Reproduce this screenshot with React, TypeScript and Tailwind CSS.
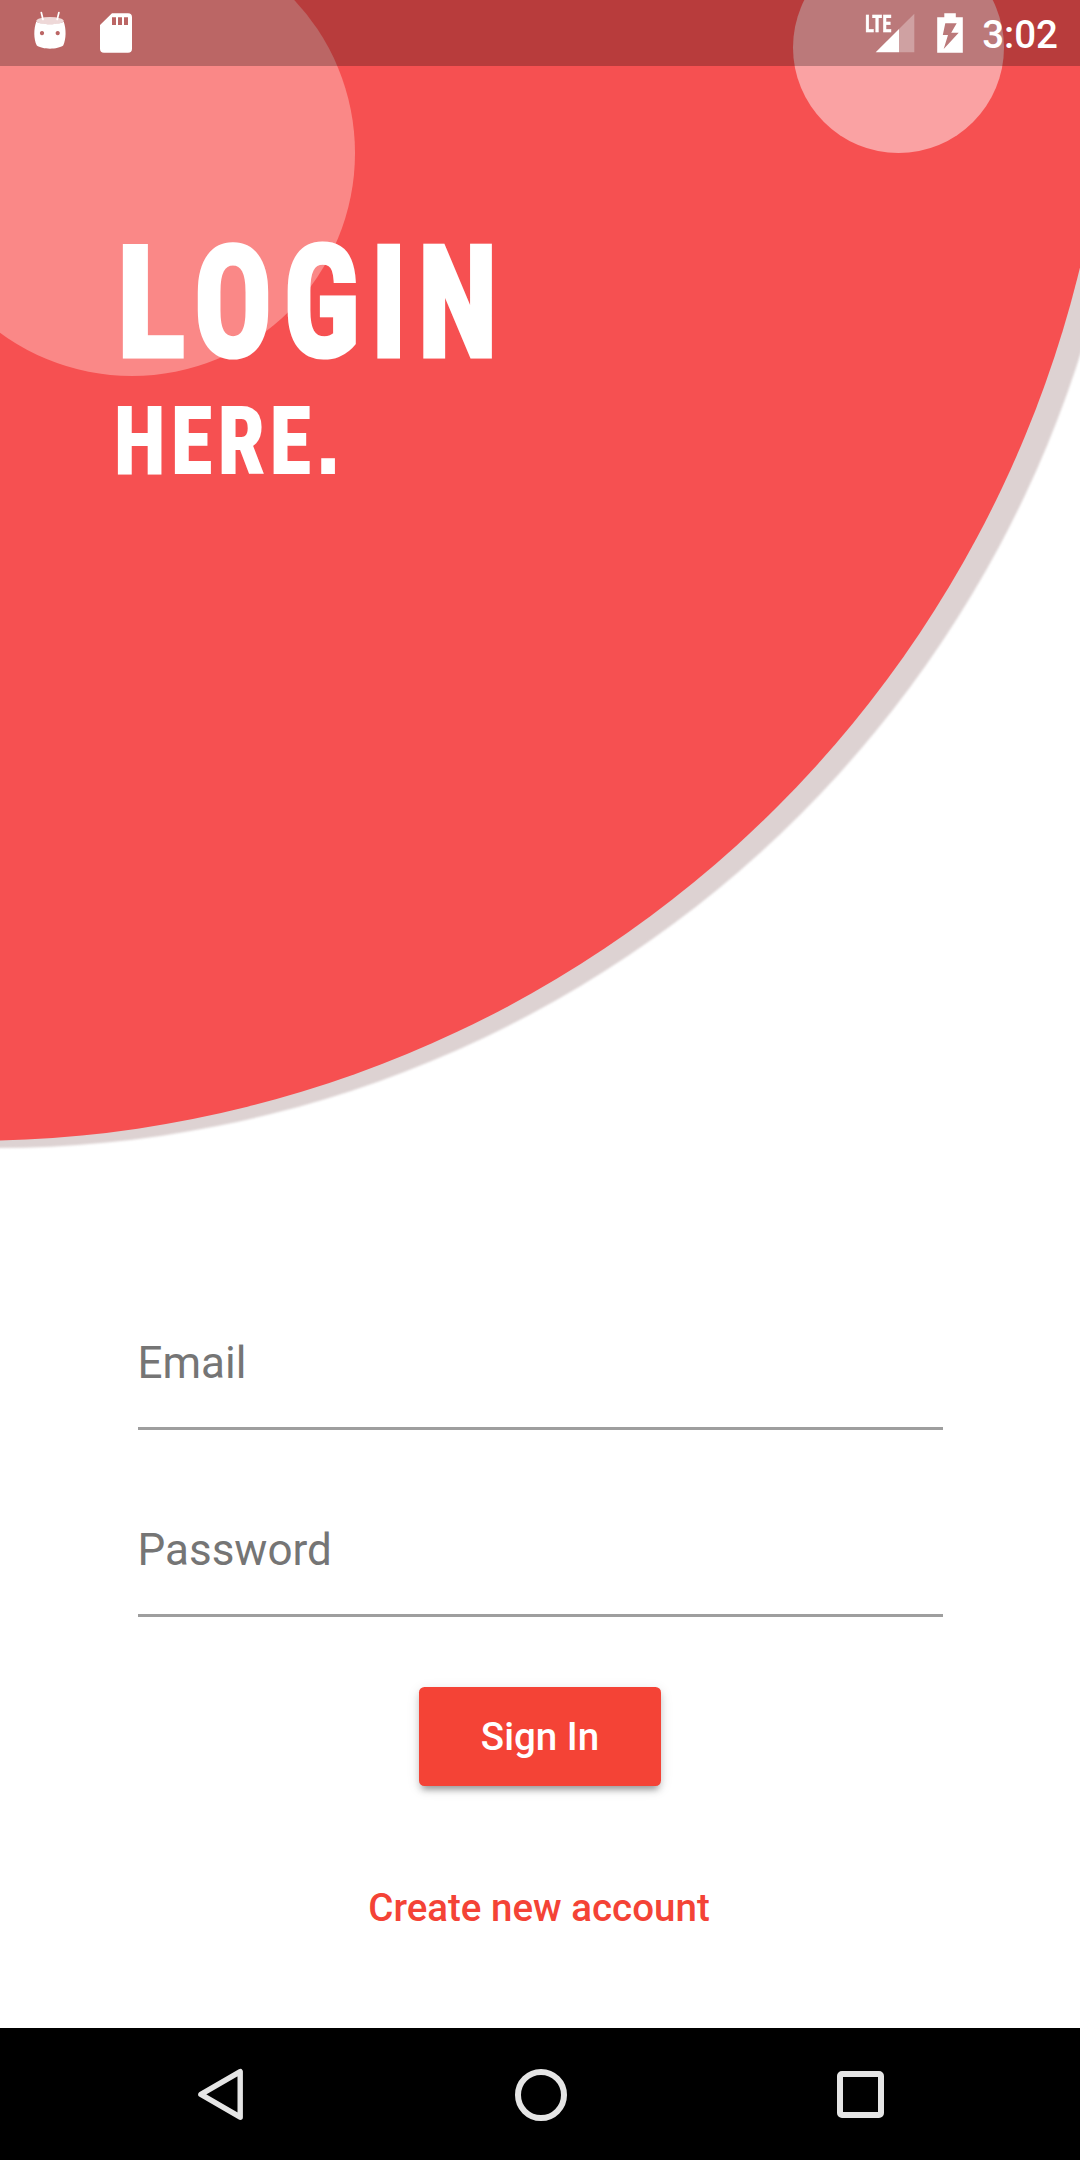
import React from "react";

function AndroidIcon() {
  return (
    <svg className="h-[66px] w-[34px]" viewBox="33 0 34 66" fill="#fff">
      <path d="M41.3 12.5 L43 19.5 M58.9 12.5 L57.2 19.5" stroke="#fff" strokeWidth="1.7" strokeLinecap="round" />
      <path
        fillRule="evenodd"
        d="M36.3 21.5 C41 25.2 59 25.2 63.7 21.5 C66.3 29 66.3 39 63.2 45.6 C58 49.7 42 49.7 36.8 45.6 C33.6 39 33.6 29 36.3 21.5 Z M42 31 a2.1 2.1 0 1 0 .01 0 Z M57.7 31 a2.1 2.1 0 1 0 .01 0 Z"
      />
      <ellipse cx="50" cy="20.8" rx="13.7" ry="3.7" opacity="0.75" />
    </svg>
  );
}

function SdCardIcon() {
  return (
    <svg className="ml-[33px] h-[66px] w-[32px]" viewBox="100 0 32 66" fill="#fff">
      <path
        fillRule="evenodd"
        d="M112 13.2 H128 a4 4 0 0 1 4 4 V48.7 a4 4 0 0 1 -4 4 H104 a4 4 0 0 1 -4 -4 V25 Z M112 17.2 V25 H116 V17.2 Z M118 17.2 V25 H122 V17.2 Z M124 17.2 V25 H128 V17.2 Z"
      />
    </svg>
  );
}

function SignalIcon() {
  return (
    <div className="relative h-[66px] w-[50px]">
      <svg className="h-[66px] w-[50px]" viewBox="865 0 50 66" fill="#fff">
        <path d="M899 29 L914.3 13.8 V52.3 H899 Z" opacity="0.3" />
        <path d="M875.7 52.3 L899 29 V52.3 Z" />
      </svg>
      <span className="absolute left-0 top-[11.5px] origin-left scale-x-[0.8] text-[23.5px] leading-6 font-bold text-white [-webkit-text-stroke:0.4px_white] [font-stretch:75%]">
        LTE
      </span>
    </div>
  );
}

function BatteryIcon() {
  return (
    <svg className="ml-[22px] h-[66px] w-[26px]" viewBox="937 0 26 66" fill="#fff">
      <path
        fillRule="evenodd"
        d="M944.3 13.2 H955.8 V17.2 H962.8 V52.7 H937.2 V17.2 H944.3 Z M945.3 23.2 L942.8 35 H948 L943.7 49 L958.7 32.8 H951.2 L956.7 23.2 Z"
      />
    </svg>
  );
}

function StatusBar() {
  return (
    <div className="relative flex h-[66px] w-full items-center bg-black/25 pl-[33px] pr-[22px]">
      <AndroidIcon />
      <SdCardIcon />
      <div className="ml-auto flex items-center">
        <SignalIcon />
        <BatteryIcon />
        <span className="ml-[19px] mt-[5px] text-[38.5px] leading-none font-medium text-white">3:02</span>
      </div>
    </div>
  );
}

function Hero() {
  return (
    <header className="relative h-[1160px] w-full overflow-hidden">
      <div className="absolute -left-[1143.6px] -top-[1147.8px] h-[2295.6px] w-[2277.2px] rounded-full bg-[#ddd2d2] blur-[0.8px]" />
      <div className="absolute -left-[1172.2px] -top-[1143.7px] size-[2284.4px] rounded-full bg-[#f65051]" />
      <div className="absolute -left-[91px] -top-[70.5px] size-[446px] rounded-full bg-[#fa8887]" />
      <div className="absolute left-[793.3px] -top-[57.7px] size-[211px] rounded-full bg-[#faa2a3]" />
      <StatusBar />
      <div className="relative pl-[114px] pt-[158px] text-white">
        <h1 className="ml-[3px] w-max origin-left scale-x-[0.84] text-[154px] leading-[160px] font-bold tracking-[14px] [-webkit-text-stroke:5px_white] [font-stretch:75%]">
          <span className="mr-[4px] inline-block origin-left scale-x-[1.1]">L</span>OGIN
        </h1>
        <p className="-mt-[2px] w-max origin-left scale-x-[0.9] text-[93px] leading-[118px] font-bold tracking-[6.3px] [-webkit-text-stroke:2px_white] [font-stretch:75%]">
          HERE<span className="font-['Liberation_Sans']">.</span>
        </p>
      </div>
    </header>
  );
}

function Field({ label, type }: { label: string; type: string }) {
  return (
    <input
      type={type}
      placeholder={label}
      className="h-[187px] w-full border-b-3 border-[#9e9e9e] bg-transparent pt-[62px] pb-[7px] text-[44px] text-[#757575] outline-none placeholder:text-[#757575]"
    />
  );
}

function NavBar() {
  return (
    <nav className="mt-auto flex h-[132px] w-full items-center justify-between bg-black pt-px pl-[198px] pr-[196px]">
      <svg className="h-[54px] w-[46px]" viewBox="0 0 46 54" fill="none" stroke="#e5e5e5" strokeWidth="5.4" strokeLinejoin="round">
        <path d="M42.2 3.6 V49.2 L2.9 26.4 Z" />
      </svg>
      <div className="size-[52px] rounded-full border-[6px] border-[#e5e5e5]" />
      <div className="size-[47px] rounded-[5px] border-[6px] border-[#e5e5e5]" />
    </nav>
  );
}

export default function App() {
  return (
    <main className="flex h-[2160px] w-[1080px] flex-col overflow-hidden bg-white font-['Roboto',sans-serif]">
      <Hero />
      <form className="flex flex-col items-center px-[137.5px] pt-[83px]">
        <Field label="Email" type="email" />
        <Field label="Password" type="password" />
        <button
          type="button"
          className="mt-[70px] h-[99px] w-[242px] rounded-[5.5px] bg-[#f44336] text-[38.5px] font-medium text-white shadow-[0_8px_5px_-5px_rgba(0,0,0,0.2),0_5px_6px_rgba(0,0,0,0.14),0_3px_13px_rgba(0,0,0,0.12)]"
        >
          Sign In
        </button>
        <button type="button" className="mr-[2px] mt-[72px] h-[99px] text-[38.5px] font-medium text-[#f44336]">
          Create new account
        </button>
      </form>
      <NavBar />
    </main>
  );
}
